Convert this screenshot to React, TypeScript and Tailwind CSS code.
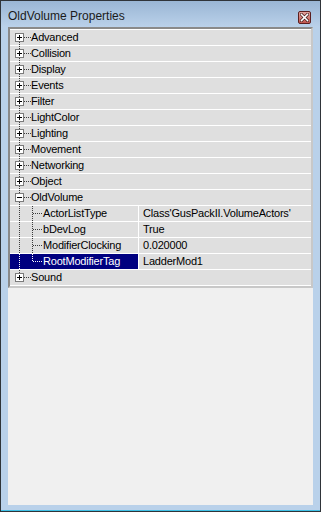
import { Fragment } from 'react';

type Row = {
  label: string;
  value?: string;
  child?: boolean;
  open?: boolean;
  last?: boolean;
  selected?: boolean;
};

const rows: Row[] = [
  { label: 'Advanced' },
  { label: 'Collision' },
  { label: 'Display' },
  { label: 'Events' },
  { label: 'Filter' },
  { label: 'LightColor' },
  { label: 'Lighting' },
  { label: 'Movement' },
  { label: 'Networking' },
  { label: 'Object' },
  { label: 'OldVolume', open: true },
  { label: 'ActorListType', value: "Class'GusPackII.VolumeActors'", child: true },
  { label: 'bDevLog', value: 'True', child: true },
  { label: 'ModifierClocking', value: '0.020000', child: true },
  { label: 'RootModifierTag', value: 'LadderMod1', child: true, last: true, selected: true },
  { label: 'Sound' },
];

function TreeLines({ row, first, lastTop }: { row: Row; first: boolean; lastTop: boolean }) {
  const line = row.selected ? '#ffffff' : '#3c3c3c';
  return (
    <svg
      width="44"
      height="16"
      className="absolute left-0 top-0 z-10 pointer-events-none overflow-visible"
      shapeRendering="crispEdges"
    >
      {row.child ? (
        <Fragment>
          <line x1="9.5" y1="0" x2="9.5" y2="16" stroke={line} strokeDasharray="1 1" />
          <line x1="22.5" y1="0" x2="22.5" y2={row.last ? 8 : 16} stroke={line} strokeDasharray="1 1" />
          <line x1="23" y1="7.5" x2="33" y2="7.5" stroke={line} strokeDasharray="1 1" />
        </Fragment>
      ) : (
        <Fragment>
          {!first && <line x1="9.5" y1="0" x2="9.5" y2="3" stroke={line} strokeDasharray="1 1" />}
          {!lastTop && <line x1="9.5" y1="12" x2="9.5" y2="16" stroke={line} strokeDasharray="1 1" />}
          <line x1="14" y1="7.5" x2="21" y2="7.5" stroke={line} strokeDasharray="1 1" />
          <rect x="5.5" y="3.5" width="8" height="8" fill="#ffffff" stroke="#7a7a7a" />
          <line x1="7" y1="7.5" x2="12" y2="7.5" stroke="#000000" />
          {!row.open && <line x1="9.5" y1="5" x2="9.5" y2="10" stroke="#000000" />}
        </Fragment>
      )}
    </svg>
  );
}

function CloseButton() {
  return (
    <div className="w-[13px] h-[13px] mt-[10px] rounded-[2px] border border-[#5b1e1e] bg-gradient-to-b from-[#e0a29c] to-[#c0554f] flex items-center justify-center">
      <svg width="9" height="9" viewBox="0 0 9 9">
        <path d="M1.5 1.5 L7.5 7.5 M7.5 1.5 L1.5 7.5" stroke="#3a1010" strokeWidth="3" strokeLinecap="square" />
        <path d="M1.5 1.5 L7.5 7.5 M7.5 1.5 L1.5 7.5" stroke="#ffffff" strokeWidth="1.6" strokeLinecap="square" />
      </svg>
    </div>
  );
}

export default function App() {
  const lastTopIndex = rows.length - 1;
  return (
    <div className="w-[321px] h-[512px] bg-[#2f3439] p-px" style={{ fontFamily: '"Liberation Sans", Arial, sans-serif' }}>
      <div className="flex flex-col h-full bg-[#b9d1ea] border-b border-[#3fc1e6]">
        {/* title bar */}
        <div className="h-[26px] flex items-start justify-between pl-[7px] pr-[9px] bg-gradient-to-b from-[#9ab6d4] to-[#bad1ea]">
          <span className="mt-[8px] text-[12px] leading-[14px] text-[#1b1b1b]">OldVolume Properties</span>
          <CloseButton />
        </div>

        {/* client area */}
        <div className="flex-1 px-[7px] pb-[5px]">
          <div className="h-full bg-[#f0f0f0]">
            <div className="border-2 border-t-[#8a8a8a] border-l-[#8a8a8a] border-b-[#c8c8c8] border-r-[#c8c8c8] bg-white pt-px">
              {rows.map((row, i) => (
                <div key={row.label} className="relative flex h-[15px] mb-px text-[11px] leading-[15px] tracking-[-0.2px]">
                  <TreeLines row={row} first={i === 0} lastTop={i === lastTopIndex} />
                  {row.child ? (
                    <Fragment>
                      <div
                        className={`w-[128px] mr-px pl-[33px] whitespace-nowrap ${
                          row.selected ? 'bg-[#000080] text-white' : 'bg-[#dfdfdf] text-black'
                        }`}
                      >
                        {row.label}
                      </div>
                      <div className="flex-1 bg-[#dfdfdf] pl-[4px] text-black whitespace-nowrap">{row.value}</div>
                    </Fragment>
                  ) : (
                    <div className="flex-1 bg-[#dfdfdf] pl-[21px] text-black">{row.label}</div>
                  )}
                </div>
              ))}
            </div>
          </div>
        </div>
      </div>
    </div>
  );
}
